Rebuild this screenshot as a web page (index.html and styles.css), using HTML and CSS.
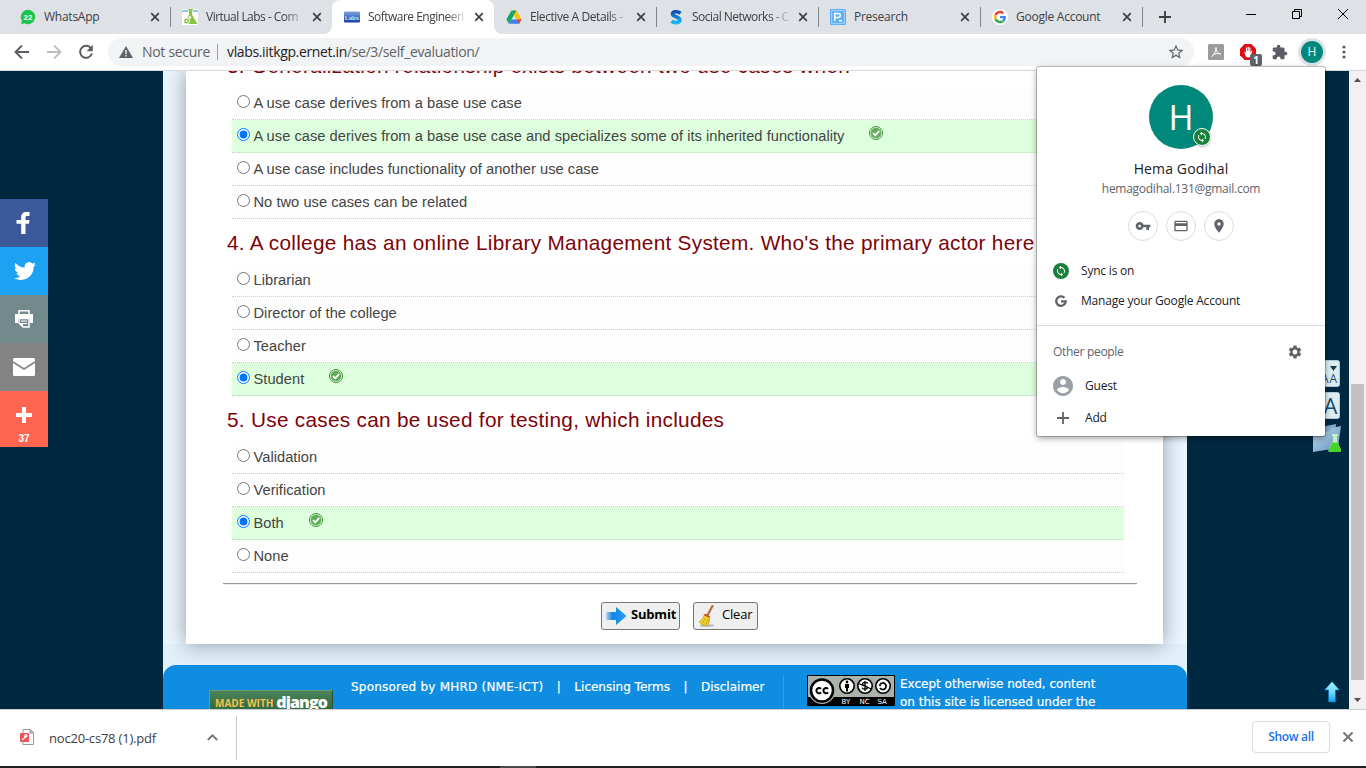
FILE: index.html
```html
<!DOCTYPE html>
<html lang="en">
<head>
<meta charset="utf-8">
<title>Software Engineering Virtual Lab</title>
<link rel="stylesheet" href="styles.css">
</head>
<body>
<svg class="defs" aria-hidden="true">
  <defs>
    <symbol id="close" viewBox="0 0 10 10"><path d="M1.2 1.2l7.6 7.6M8.8 1.2L1.2 8.8" stroke="currentColor" stroke-width="1.7" fill="none"/></symbol>
    <symbol id="sync" viewBox="0 0 24 24"><path fill="currentColor" d="M12 4V1L8 5l4 4V6c3.31 0 6 2.69 6 6 0 1.01-.25 1.97-.7 2.8l1.46 1.46C19.54 15.03 20 13.57 20 12c0-4.42-3.58-8-8-8zm0 14c-3.31 0-6-2.69-6-6 0-1.01.25-1.97.7-2.8L5.24 7.74C4.46 8.97 4 10.43 4 12c0 4.42 3.58 8 8 8v3l4-4-4-4v3z"/></symbol>
    <symbol id="tick" viewBox="0 0 14 14"><circle cx="7" cy="7" r="6.500" fill="#f4fff2" stroke="#3f8f3f" stroke-width="1"/><circle cx="7" cy="7" r="5.400" fill="#5fae5b"/><path d="M4 7l2.200 2.300L10.200 4.800" stroke="#fff" stroke-width="1.800" fill="none"/></symbol>
    <linearGradient id="arrowBlue" x1="0" x2="1"><stop offset="0" stop-color="#0a77dd" stop-opacity=".2"/><stop offset=".3" stop-color="#1286e6"/><stop offset="1" stop-color="#2b9df5"/></linearGradient>
    <linearGradient id="upBlue" x1="0" x2="0" y1="0" y2="1"><stop offset="0" stop-color="#a5f4ff"/><stop offset=".5" stop-color="#6fdcff"/><stop offset="1" stop-color="#0fa4f8"/></linearGradient>
    <linearGradient id="folder" x1="0" x2="1" y1="0" y2="1"><stop offset="0" stop-color="#c5dcf0"/><stop offset="1" stop-color="#5d8fba"/></linearGradient>
    <linearGradient id="labs" x1="0" x2="0" y1="0" y2="1"><stop offset="0" stop-color="#7fa8e0"/><stop offset="1" stop-color="#123fa0"/></linearGradient>
    <linearGradient id="ess" x1="0" x2="0" y1="0" y2="1"><stop offset="0" stop-color="#0b4fae"/><stop offset="1" stop-color="#19b6f2"/></linearGradient>
  </defs>
</svg>

<header class="tabstrip">
  <div class="tab">
    <svg class="fav" viewBox="0 0 16 16"><path d="M8 .8A7.2 7.200 0 1 1 4.500 14.300L1 15.300l1-3.300A7.200 7.200 0 0 1 8 .8z" fill="#19c54a"/><text x="8" y="11" text-anchor="middle" class="fav-count">22</text></svg>
    <span class="tab-title t1">WhatsApp</span><svg class="tab-x"><use href="#close"/></svg>
  </div>
  <div class="tab sep-before">
    <svg class="fav" viewBox="0 0 16 16"><rect width="16" height="16" fill="#fff"/><path d="M0 2h6M11 2h5" stroke="#62b7e5" stroke-width="1.300"/><path d="M6 0h5v1h-.800v5L15.500 15H2.500L7 6V1H6z" fill="#8cc63e"/><circle cx="4.500" cy="12" r="3" fill="#8cc63e" stroke="#fff"/><circle cx="4.500" cy="12" r="1" fill="#fff"/><circle cx="8" cy="8.500" r="1.200" fill="#fff"/></svg>
    <span class="tab-title t2">Virtual Labs - Com</span><svg class="tab-x"><use href="#close"/></svg>
  </div>
  <div class="tab active">
    <svg class="fav" viewBox="0 0 16 16"><rect y="2.500" width="16" height="11" rx="1" fill="url(#labs)"/><text x="8" y="10.500" text-anchor="middle" class="fav-labs">Labs</text></svg>
    <span class="tab-title t3">Software Engineeri</span><svg class="tab-x"><use href="#close"/></svg>
  </div>
  <div class="tab">
    <svg class="fav" viewBox="0 0 16 16"><path d="M5.500 1.500h5L8 6z" fill="#0f9d58"/><path d="M5.500 1.500L.4 10.400 3 14.700 8 6z" fill="#11a861"/><path d="M10.500 1.500l5.100 8.900h-5.100L8 6z" fill="#ffc107"/><path d="M5.400 10.400h5.200L15.600 10.400 13 14.700H3z" fill="#3f7ff0"/><path d="M10.500 10.400h5.100L13 14.700z" fill="#ea4335"/></svg>
    <span class="tab-title t4">Elective A Details -</span><svg class="tab-x"><use href="#close"/></svg>
  </div>
  <div class="tab sep-before">
    <svg class="fav" viewBox="0 0 16 16"><path d="M12.500 4.200C10 2.300 4.500 2 4.500 5.100c0 3 7.300 2.300 7.300 6 0 3.100-5.500 3.300-8.300 1.200" fill="none" stroke="url(#ess)" stroke-width="3.700"/></svg>
    <span class="tab-title t5">Social Networks - C</span><svg class="tab-x"><use href="#close"/></svg>
  </div>
  <div class="tab sep-before">
    <svg class="fav" viewBox="0 0 16 16"><rect width="16" height="16" rx="1" fill="#5bb0fb"/><rect x="1.700" y="1.700" width="12.600" height="12.600" fill="none" stroke="#bcdffd" stroke-width=".8"/><path d="M4.700 12V4.500h3.600a2 2 0 0 1 0 4H4.700M9 11.700h3" fill="none" stroke="#fff" stroke-width="1.500"/></svg>
    <span class="tab-title t6">Presearch</span><svg class="tab-x"><use href="#close"/></svg>
  </div>
  <div class="tab sep-before">
    <svg class="fav" viewBox="0 0 16 16"><circle cx="8" cy="8" r="8" fill="#fff"/><g transform="translate(1.800 1.800) scale(.258)"><path fill="#EA4335" d="M24 9.500c3.540 0 6.710 1.220 9.210 3.600l6.850-6.850C35.900 2.380 30.470 0 24 0 14.620 0 6.510 5.380 2.560 13.220l7.980 6.190C12.430 13.720 17.740 9.500 24 9.500z"/><path fill="#4285F4" d="M46.980 24.550c0-1.570-.15-3.090-.38-4.550H24v9.020h12.940c-.58 2.960-2.260 5.480-4.780 7.180l7.730 6c4.510-4.180 7.090-10.360 7.090-17.650z"/><path fill="#FBBC05" d="M10.530 28.590A14.500 14.500 0 0 1 10.530 19.410l-7.980-6.190a24 24 0 0 0 0 21.560z"/><path fill="#34A853" d="M24 48c6.480 0 11.930-2.130 15.890-5.810l-7.730-6c-2.150 1.450-4.920 2.300-8.160 2.300-6.260 0-11.570-4.220-13.470-9.910l-7.980 6.190C6.510 42.620 14.620 48 24 48z"/></g></svg>
    <span class="tab-title t7">Google Account</span><svg class="tab-x"><use href="#close"/></svg>
  </div>
  <div class="newtab"><svg viewBox="0 0 12 12"><path d="M6 0v12M0 6h12" stroke="#3c4043" stroke-width="1.900"/></svg></div>
  <div class="winctl">
    <svg viewBox="0 0 10 10"><path d="M0 5.500h10" stroke="#000"/></svg>
    <svg viewBox="0 0 10 10"><path d="M.5 2.500h7v7h-7zM2.500 2.500v-2h7v7h-2" fill="none" stroke="#000"/></svg>
    <svg viewBox="0 0 10 10"><path d="M0 0l10 10M10 0L0 10" stroke="#000"/></svg>
  </div>
</header>

<nav class="toolbar">
  <svg class="nav-i" viewBox="0 0 16 16"><path d="M15 8H2M8 1.500L1.500 8 8 14.500" fill="none" stroke="#5a5d61" stroke-width="1.900"/></svg>
  <svg class="nav-i" viewBox="0 0 16 16"><path d="M1 8h13M8 1.500L14.500 8 8 14.500" fill="none" stroke="#bbbdc0" stroke-width="1.900"/></svg>
  <svg class="nav-i" viewBox="0 0 16 16"><path d="M13 4.300A6 6 0 1 0 13.900 9.500" fill="none" stroke="#5a5d61" stroke-width="2"/><path d="M14.800.8v6.400H8.500z" fill="#5a5d61"/></svg>
  <div class="omnibox">
    <svg class="warn" viewBox="0 0 14 12"><path d="M7 0l7 12H0z" fill="#5f6368"/><path d="M7 4v4M7 9v1.500" stroke="#f1f3f4" stroke-width="1.400"/></svg>
    <span class="insecure">Not secure</span><i></i>
    <span class="url"><b>vlabs.iitkgp.ernet.in</b>/se/3/self_evaluation/</span>
    <svg class="star" viewBox="0 0 24 24"><path fill="#5f6368" d="M22 9.240l-7.190-.62L12 2 9.190 8.630 2 9.240l5.460 4.730L5.820 21 12 17.270 18.180 21l-1.630-7.030L22 9.240zM12 15.400l-3.760 2.270 1-4.280-3.320-2.880 4.380-.38L12 6.100l1.710 4.040 4.380.38-3.320 2.880 1 4.280L12 15.400z"/></svg>
  </div>
  <div class="exts">
    <svg viewBox="0 0 16 16"><rect width="16" height="16" rx="1.500" fill="#9b9b9b"/><path d="M3.500 12.500C6 11 8 7.500 8 3.500 8 7 10 10 12.800 10 10 9 6 9.500 3.500 12.500z" fill="none" stroke="#fff" stroke-width="1"/></svg>
    <div class="adblock"><svg viewBox="0 0 16 16"><path d="M4.700 0h6.600L16 4.700v6.600L11.300 16H4.700L0 11.300V4.700z" fill="#e30b13"/><path d="M4.300 8l1 3.500Q6 13.500 8 13.500q2.600 0 3-2.500l1.500-4-1.100-.3L10.500 9V3.500H9.300V7H8.800V2.700H7.600V7H7V3.600H5.900V9L5 7.500z" fill="#fff"/></svg><span class="count">1</span></div>
    <svg viewBox="1 0 23 23"><path fill="#5a5d61" d="M20.500 11H19V7c0-1.100-.9-2-2-2h-4V3.500C13 2.120 11.880 1 10.500 1S8 2.120 8 3.500V5H4c-1.100 0-1.990.9-1.990 2v3.800H3.500c1.490 0 2.700 1.210 2.700 2.700s-1.210 2.700-2.700 2.700H2V20c0 1.100.9 2 2 2h3.800v-1.500c0-1.490 1.210-2.700 2.700-2.700 1.490 0 2.700 1.210 2.700 2.700V22H17c1.100 0 2-.9 2-2v-4h1.500c1.380 0 2.500-1.120 2.500-2.500S21.880 11 20.500 11z"/></svg>
    <span class="me">H</span>
    <svg class="dots" viewBox="0 0 16 16"><g fill="#5a5d61"><circle cx="8" cy="3" r="1.600"/><circle cx="8" cy="8" r="1.600"/><circle cx="8" cy="13" r="1.600"/></g></svg>
  </div>
</nav>

<main class="viewport">
  <aside class="share">
    <div class="fb"><svg viewBox="0 0 24 24" width="24" height="24"><path fill="#fff" d="M17.500 1v4h-2.300c-1.300 0-1.700.6-1.700 1.700V9h4l-.5 3.700h-3.500V23H9.200V12.700H4.500V9h4.700V6.200C9.200 2.800 11.300 1 14.400 1z"/></svg></div>
    <div class="tw"><svg viewBox="0 0 24 24" width="22" height="22"><path fill="#fff" d="M23.950 4.570a10 10 0 0 1-2.820.77 4.960 4.960 0 0 0 2.160-2.720c-.95.55-2 .95-3.120 1.180a4.920 4.920 0 0 0-8.390 4.480C7.690 8.090 4.070 6.130 1.640 3.160a4.920 4.920 0 0 0 1.520 6.570 4.900 4.900 0 0 1-2.230-.61v.06c0 2.380 1.700 4.370 3.950 4.820a5 5 0 0 1-2.210.09 4.940 4.940 0 0 0 4.600 3.420A9.870 9.870 0 0 1 0 19.540a13.940 13.940 0 0 0 7.550 2.210c9.050 0 14-7.500 14-13.980 0-.21 0-.42-.02-.63a9.940 9.940 0 0 0 2.460-2.550z"/></svg></div>
    <div class="pr"><svg viewBox="0 0 20 18" width="20" height="18"><path d="M5 4V.8h10V4" fill="none" stroke="#fff" stroke-width="1.500"/><path d="M1 4h18v9h-3V8H4v5H1z" fill="#fff"/><path d="M5 8.500h10V17H9l-4-4z" fill="#738a8d" stroke="#fff" stroke-width="1.500"/><path d="M7 11h6M8 13.500h5" stroke="#fff"/><path d="M5 13h4v4z" fill="#fff"/></svg></div>
    <div class="ml"><svg viewBox="0 0 22 18" width="22" height="18"><rect width="22" height="18" rx="1.500" fill="#fff"/><path d="M0 4l11 7 11-7" fill="none" stroke="#848484" stroke-width="1.500"/></svg></div>
    <div class="mo"><svg viewBox="0 0 16 16" width="16" height="16"><path d="M8 0v16M0 8h16" stroke="#fff" stroke-width="4"/></svg><span>37</span></div>
  </aside>

  <section class="site">
    <div class="sheet-wrap"><div class="sheet">
      <h2 class="cut"><span>3. Generalization relationship exists between two use cases when</span></h2>
      <ul>
        <li><input type="radio" name="q3"><span>A use case derives from a base use case</span></li>
        <li class="ok"><input type="radio" name="q3" checked><span>A use case derives from a base use case and specializes some of its inherited functionality</span><svg class="tick"><use href="#tick"/></svg></li>
        <li><input type="radio" name="q3"><span>A use case includes functionality of another use case</span></li>
        <li><input type="radio" name="q3"><span>No two use cases can be related</span></li>
      </ul>
      <h2 class="q4"><span>4. A college has an online Library Management System. Who's the primary actor here</span></h2>
      <ul>
        <li><input type="radio" name="q4"><span>Librarian</span></li>
        <li><input type="radio" name="q4"><span>Director of the college</span></li>
        <li><input type="radio" name="q4"><span>Teacher</span></li>
        <li class="ok"><input type="radio" name="q4" checked><span>Student</span><svg class="tick"><use href="#tick"/></svg></li>
      </ul>
      <h2><span>5. Use cases can be used for testing, which includes</span></h2>
      <ul>
        <li><input type="radio" name="q5"><span>Validation</span></li>
        <li><input type="radio" name="q5"><span>Verification</span></li>
        <li class="ok"><input type="radio" name="q5" checked><span>Both</span><svg class="tick"><use href="#tick"/></svg></li>
        <li><input type="radio" name="q5"><span>None</span></li>
      </ul>
      <hr>
      <div class="actions">
        <button class="submit"><svg viewBox="0 0 22 20" width="22" height="20"><path d="M1 6h10V1l10.500 9L11 19v-5H1z" fill="url(#arrowBlue)"/></svg><b>Submit</b></button>
        <button class="clear"><svg viewBox="0 0 18 22" width="18" height="22"><ellipse cx="9" cy="20.500" rx="7.500" ry="1.300" fill="#bbb"/><path d="M14.500 1L9 11" stroke="#b66a42" stroke-width="2.200" stroke-linecap="round"/><path d="M6.500 9.500l5 2.500c.5 3-.5 7-3 8.500C6 21 2 19 1.500 16.500 4 15 5.500 12 6.500 9.500z" fill="#f0cf28" stroke="#c09a10" stroke-width=".8"/><path d="M6.500 9.500l5 2.500" stroke="#d9362b" stroke-width="1.600"/><path d="M7.500 13l-3 5M10 14l-2 5" stroke="#c9a315" stroke-width=".8"/></svg><span>Clear</span></button>
      </div>
    </div></div>
    <footer class="foot">
      <div class="django"><span>MADE WITH</span><b>django</b></div>
      <div class="links"><span class="mhrd">Sponsored by MHRD (NME-ICT)</span><em>|</em><span>Licensing Terms</span><em>|</em><span>Disclaimer</span></div>
      <div class="license">
        <svg viewBox="0 0 88 31" width="88" height="31"><rect width="88" height="31" rx="1" fill="#000"/><rect x="1" y="1" width="86" height="21" fill="#aab2ab"/><path d="M1 22h28v8H1z" fill="#000"/><circle cx="15" cy="15.500" r="13.500" fill="#aab2ab"/><circle cx="15" cy="15.500" r="11" fill="#fff" stroke="#000" stroke-width="2.500"/><g fill="none" stroke="#000" stroke-width="2"><path d="M14 13.900a2.600 2.600 0 1 0 0 3.400M21 13.900a2.600 2.600 0 1 0 0 3.400"/></g><g fill="#fff" stroke="#000" stroke-width="1.600"><circle cx="40" cy="11" r="7.200"/><circle cx="58" cy="11" r="7.200"/><circle cx="76" cy="11" r="7.200"/></g><circle cx="40" cy="7" r="1.400"/><path d="M38 9h4v4h-1v3.500h-2V13h-1z"/><path d="M61 8.500c-1-1.500-5.500-1.500-5.500.5s5 1.500 5 3.600-4.500 2-5.500.2M58 6v10M51.500 8.500l13 5.500" fill="none" stroke="#000" stroke-width="1.300"/><path d="M73 9.500a3.300 3.300 0 1 1 0 3.500" fill="none" stroke="#000" stroke-width="1.700"/><path d="M71.300 9.500h3.400L73 11.500z"/><g class="cc-t"><text x="34.500" y="28.500">BY</text><text x="52.500" y="28.500">NC</text><text x="70.500" y="28.500">SA</text></g></svg>
        <p>Except otherwise noted, content<br>on this site is licensed under the</p>
      </div>
    </footer>
  </section>

  <div class="gutter">
    <div class="font-tools">
      <svg viewBox="0 0 27 27"><rect x=".5" y=".5" width="26" height="26" rx="2" fill="#dcecf3" stroke="#a9cbe0"/><path d="M17 6h7L20.500 11z" fill="#163a53"/><text x="16.500" y="22.500" class="aa">A</text><text x="8" y="22.500" class="aa">A</text></svg>
      <svg viewBox="0 0 27 27"><rect x=".5" y=".5" width="26" height="26" rx="2" fill="#dcecf3" stroke="#a9cbe0"/><text x="10.500" y="21.500" class="big-a">A</text></svg>
      <svg class="folder" viewBox="0 0 30 30"><path d="M1 9l8-5 15-3-1 18-21 9z" fill="#7fa9cb"/><path d="M1 11l17-3 2-3 9-2-3 22-25 4z" fill="url(#folder)"/><path d="M20 11h6v2h-1v5l4 9q0 2-2 2h-9q-2 0-1.500-2L21 18v-5h-1z" fill="#c8efc0"/><path d="M20.500 19.500h5L29 27q0 2-2 2h-9q-2 0-1.500-2z" fill="#45d726"/></svg>
    </div>
    <svg class="top" viewBox="0 0 16 22" width="16" height="22"><path d="M8 .5l7.500 8.500h-4v12h-7V9h-4z" fill="url(#upBlue)" stroke="#0d6da6" stroke-width=".7"/></svg>
  </div>
  <div class="scrollbar"><svg viewBox="0 0 7 4"><path d="M0 4l3.500-4L7 4z"/></svg><div class="thumb"></div><svg viewBox="0 0 7 4"><path d="M0 0h7L3.500 4z"/></svg></div>
</main>

<div class="shelf">
  <svg class="pdf" viewBox="0 0 16 16"><path d="M3 .5h7.500L13.500 3.500v12H3z" fill="#fff" stroke="#999"/><path d="M10 .5v3.500h3.500" fill="#bbb" stroke="#999"/><rect y="4" width="9" height="9" rx="1" fill="#ee5156"/><path d="M2 11l3-2.500V6q2-1 2 .7T4 8" fill="none" stroke="#fff" stroke-width="1.200"/></svg>
  <span class="file">noc20-cs78 (1).pdf</span>
  <svg class="chev" viewBox="0 0 10 6"><path d="M.7 5.300L5 1l4.300 4.300" fill="none" stroke="#73777b" stroke-width="1.700"/></svg>
  <i></i>
  <button class="showall">Show all</button>
  <svg class="shelf-x"><use href="#close"/></svg>
</div>
<div class="taskbar"><i></i></div>

<div class="profile">
  <div class="avatar">H<span class="badge"><svg><use href="#sync"/></svg></span></div>
  <div class="name">Hema Godihal</div>
  <div class="mail">hemagodihal.131@gmail.com</div>
  <div class="chips">
    <span><svg viewBox="0 0 24 24"><path d="M12.650 10C11.830 7.670 9.610 6 7 6c-3.310 0-6 2.690-6 6s2.690 6 6 6c2.610 0 4.830-1.670 5.650-4H17v4h4v-4h2v-4H12.650zM7 14c-1.100 0-2-.9-2-2s.9-2 2-2 2 .9 2 2-.9 2-2 2z"/></svg></span>
    <span><svg viewBox="0 0 24 24"><path d="M20 4H4c-1.110 0-1.990.89-1.990 2L2 18c0 1.110.89 2 2 2h16c1.110 0 2-.89 2-2V6c0-1.110-.89-2-2-2zm0 14H4v-6h16v6zm0-10H4V6h16v2z"/></svg></span>
    <span><svg viewBox="0 0 24 24"><path d="M12 2C8.130 2 5 5.130 5 9c0 5.250 7 13 7 13s7-7.750 7-13c0-3.870-3.130-7-7-7zm0 9.500c-1.380 0-2.500-1.120-2.500-2.500s1.120-2.500 2.500-2.500 2.500 1.120 2.500 2.500-1.120 2.500-2.500 2.500z"/></svg></span>
  </div>
  <div class="row sync"><span class="dot"><svg><use href="#sync"/></svg></span><span>Sync is on</span></div>
  <div class="row"><svg class="g" viewBox="0 0 48 48"><path fill="none" stroke="#5f6368" stroke-width="9" d="M38 11.500A19 19 0 1 0 43 25H24"/></svg><span>Manage your Google Account</span></div>
  <div class="others"><span>Other people</span><svg viewBox="0 0 24 24"><path fill="#5f6368" d="M19.140 12.940c.04-.3.060-.61.060-.94 0-.32-.02-.64-.07-.94l2.030-1.580c.18-.14.23-.41.12-.61l-1.920-3.320c-.12-.22-.37-.29-.59-.22l-2.390.96c-.5-.38-1.030-.7-1.620-.94l-.36-2.540c-.04-.24-.24-.41-.48-.41h-3.840c-.24 0-.43.17-.47.41l-.36 2.540c-.59.24-1.130.57-1.620.94l-2.390-.96c-.22-.08-.47 0-.59.22L2.740 8.870c-.12.21-.08.47.12.61l2.030 1.580c-.05.3-.09.63-.09.94s.02.64.07.94l-2.030 1.580c-.18.14-.23.41-.12.61l1.920 3.320c.12.22.37.29.59.22l2.390-.96c.5.38 1.030.7 1.620.94l.36 2.540c.05.24.24.41.48.41h3.840c.24 0 .44-.17.47-.41l.36-2.540c.59-.24 1.130-.56 1.620-.94l2.390.96c.22.08.47 0 .59-.22l1.920-3.320c.12-.22.07-.47-.12-.61l-2.010-1.580zM12 15.600c-1.980 0-3.600-1.620-3.600-3.600s1.620-3.600 3.600-3.600 3.600 1.620 3.600 3.600-1.620 3.600-3.600 3.600z"/></svg></div>
  <div class="person"><svg viewBox="2 2 20 20"><path fill="#9aa0a6" d="M12 2C6.480 2 2 6.480 2 12s4.480 10 10 10 10-4.480 10-10S17.520 2 12 2zm0 3c1.660 0 3 1.340 3 3s-1.340 3-3 3-3-1.340-3-3 1.340-3 3-3zm0 14.200c-2.500 0-4.710-1.280-6-3.220.03-1.990 4-3.080 6-3.080 1.990 0 5.970 1.090 6 3.080-1.290 1.940-3.500 3.220-6 3.220z"/></svg><span>Guest</span></div>
  <div class="person"><svg viewBox="0 0 20 20"><path d="M10 4v12M4 10h12" stroke="#5f6368" stroke-width="1.800"/></svg><span>Add</span></div>
</div>
</body>
</html>
```
FILE: styles.css
```css
* { box-sizing: border-box; }
body { margin: 0; width: 1366px; height: 768px; overflow: hidden; display: flex; flex-direction: column; font: 12px/16px "Open Sans", "Noto Sans", sans-serif; color: #3c4043; background: #fff; position: relative; }
svg { display: block; flex: none; }
.defs { position: absolute; width: 0; height: 0; }

/* Tab strip */
.tabstrip { height: 34px; flex: none; background: #dee1e6; padding-left: 8px; display: flex; }
.tab { width: 162px; display: flex; align-items: center; padding: 0 10px 0 12px; position: relative; }
.tab.active { background: #fff; border-radius: 8px 8px 0 0; }
.tab.active::before, .tab.active::after { content: ""; position: absolute; bottom: 0; width: 8px; height: 8px; }
.tab.active::before { left: -8px; background: radial-gradient(circle at 0 0, transparent 7.500px, #fff 8px); }
.tab.active::after { right: -8px; background: radial-gradient(circle at 100% 0, transparent 7.500px, #fff 8px); }
.sep-before::before { content: ""; position: absolute; left: 0; top: 7px; height: 20px; width: 1px; background: #808387; }
.fav { width: 16px; height: 16px; margin-right: 8px; }
.fav-count { font: bold 8px "Liberation Sans", sans-serif; fill: #fff; }
.fav-labs { font: bold 6px "Liberation Sans", sans-serif; fill: #cfe0fa; }
.tab-title { width: 98px; overflow: hidden; white-space: nowrap; letter-spacing: -.25px; }
.t2 { letter-spacing: -.52px; }
.t3 { letter-spacing: -.52px; }
.t4 { letter-spacing: -.42px; }
.t5 { letter-spacing: -.52px; }
.t2, .t3, .t4, .t5 { -webkit-mask-image: linear-gradient(90deg, #000 78px, transparent 100px); mask-image: linear-gradient(90deg, #000 78px, transparent 100px); }
.tab-x { width: 10px; height: 10px; margin-left: 8px; color: #3c4043; }
.newtab { width: 45px; display: flex; align-items: center; justify-content: center; border-left: 1px solid transparent; background: linear-gradient(#808387, #808387) 0 7px / 1px 20px no-repeat; background-origin: border-box; }
.newtab svg { width: 12px; height: 12px; }
.winctl { margin-left: auto; display: flex; gap: 36px; padding: 9px 18px 0 0; }
.winctl svg { width: 10px; height: 10px; }

/* Toolbar */
.toolbar { height: 37px; flex: none; border-bottom: 1px solid #d5d7da; display: flex; align-items: center; padding-left: 14px; }
.nav-i { width: 16px; height: 16px; margin-right: 16px; }
.omnibox { width: 1086px; height: 28px; margin-left: -2px; background: #f1f3f4; border-radius: 14px; display: flex; align-items: center; padding-left: 11px; font-size: 14px; color: #5f6368; white-space: nowrap; }
.warn { width: 14px; height: 12px; margin-right: 9px; }
.insecure { width: 75px; letter-spacing: -.3px; }
.omnibox i { width: 1px; height: 16px; background: #9a9da1; margin-right: 9px; }
.url { letter-spacing: -.35px; }
.url b { font-weight: 400; color: #202124; }
.star { width: 18px; height: 18px; margin: 0 9px 0 auto; }
.exts { display: flex; align-items: center; margin-left: 14px; gap: 16px; }
.exts svg { width: 16px; height: 16px; }
.adblock { position: relative; }
.count { position: absolute; left: 10px; top: 10px; width: 12px; height: 12px; border-radius: 2px; background: #5f6368; color: #fff; font: bold 10px/12px "Open Sans", sans-serif; text-align: center; }
.me { width: 22px; height: 22px; margin: 0 -3px; border-radius: 50%; background: #00897b; box-shadow: 0 0 0 3px #dfe1e5; color: #fff; font-size: 12px; line-height: 22px; text-align: center; }

/* Page */
.viewport { height: 638px; flex: none; background: #002941; display: flex; overflow: hidden; }
.share { width: 163px; padding-top: 128px; flex: none; }
.share div { width: 48px; height: 48px; display: flex; align-items: center; justify-content: center; }
.fb { background: #3b5998; } .tw { background: #1da1f2; padding-left: 2px; } .pr { background: #738a8d; } .ml { background: #848484; }
.share .mo { height: 56px; background: #ff6550; flex-direction: column; justify-content: flex-start; padding-top: 16px; }
.mo span { color: #fff; font: bold 10px/12px "Liberation Sans", sans-serif; margin-top: 10px; }
.site { width: 1024px; height: 638px; flex: none; background: #e2f0fa; }
.sheet-wrap { padding: 0 24px 0 23px; background: linear-gradient(#ebf5fe, #ebf5fe) 0 0 / 100% 573px no-repeat; }
.sheet { height: 573px; background: #fff; padding-left: 37px; box-shadow: 0 0 20px rgba(0,20,40,.4); clip-path: inset(0 -24px -21px -23px); font-family: "Liberation Sans", Arial, sans-serif; color: #444; }
.sheet h2 { margin: 0 0 0 4px; height: 45px; font-size: 20.800px; line-height: 45px; letter-spacing: .27px; font-weight: 400; color: #7e0308; white-space: nowrap; padding-top: 1px; }
.sheet h2.cut { height: 16px; overflow: hidden; display: flex; align-items: flex-end; padding: 0; }
.sheet h2.cut span { transform: translateY(1px); }
.sheet ul { list-style: none; margin: 0 0 0 9px; padding: 0; width: 892px; }
.sheet li { height: 33px; border-bottom: 1px dotted #ccc; display: flex; align-items: center; font-size: 14.667px; letter-spacing: .03px; line-height: 32px; background: #fdfdfd; white-space: nowrap; }
.sheet li.ok { background: #dfd; }
.sheet input { margin: 0 3.500px 4px 5px; width: 13px; height: 13px; flex: none; }
.tick { width: 14px; height: 14px; margin: 0 0 6px 25px; }
.sheet hr { width: 914px; height: 2px; margin: 10px 0 0; border: 0; border-top: 1px solid #999; background: #eee; }
.actions { display: flex; gap: 13px; padding: 17px 0 0 378px; }
.actions button { height: 28px; border: 1px solid #767676; border-radius: 3px; background: #efefef; display: flex; align-items: center; padding: 0 0 0 3px; font: 13px "Open Sans", sans-serif; color: #000; letter-spacing: -.2px; }
.submit { width: 79px; } .submit svg { margin-right: 4px; }
.clear { width: 65px; } .clear svg { margin: 0 6px 0 1px; }
.actions b, .actions button span { padding-bottom: 4px; }
.foot { margin-top: 21px; height: 60px; background: #0f8de1; border-radius: 13px 13px 0 0; display: flex; color: #fff; font: 12px/18px "DejaVu Sans", sans-serif; white-space: nowrap; -webkit-text-stroke: .2px #fff; }
.django { margin: 25px 0 0 46px; width: 124px; height: 35px; background: linear-gradient(#4d8257, #2f6940 20px); border: 1px solid #6d9a74; border-right-color: #2a4d33; display: flex; padding: 0 0 0 5px; font: bold 10px/24px "Open Sans", sans-serif; color: #f5c04c; -webkit-text-stroke: 0; }
.django b { color: #fff; font-size: 16px; font-weight: 800; line-height: 22px; margin-left: 3px; letter-spacing: -.9px; }
.links { display: flex; padding-top: 13px; margin-left: 18px; width: 432px; font-size: 12px; }
.mhrd { letter-spacing: .22px; }
.links em { font-style: normal; width: 31px; text-align: center; }
.license { margin-top: 10px; border-left: 1px solid #2ba4e0; padding-left: 23px; display: flex; }
.license p { margin: 0 0 0 5px; font-size: 12px; line-height: 18px; }
.cc-t text { font: 7px "DejaVu Sans", sans-serif; fill: #fff; }

.gutter { width: 162px; display: flex; flex-direction: column; align-items: flex-end; }
.font-tools { margin: 289px 9px 0 0; height: 120px; display: flex; flex-direction: column; gap: 5px; align-items: flex-end; }
.font-tools svg { width: 27px; height: 27px; }
.font-tools .folder { width: 30px; height: 30px; margin: -1px -2px 0 0; }
.aa { font: 12px "Open Sans", sans-serif; fill: #1c4b68; }
.big-a { font: 22px "Open Sans", sans-serif; fill: #1c4b68; }
.top { margin: 201px 9px 0 0; }
.scrollbar { width: 17px; background: #f1f1f1; display: flex; flex-direction: column; align-items: center; padding: 7px 0 7px; }
.scrollbar svg { width: 7px; height: 4px; fill: #505050; }
.thumb { width: 13px; height: 296px; margin: 302px 0 auto; background: #c1c1c1; }

/* Downloads */
.shelf { height: 57px; flex: none; border-top: 1px solid #cfcfcf; display: flex; align-items: center; padding: 0 12px 2px 20px; }
.pdf { width: 16px; height: 16px; margin-right: 13px; }
.file { width: 158px; font-size: 13px; letter-spacing: -.2px; padding-top: 2px; }
.chev { width: 11px; height: 7px; margin-right: 18px; }
.shelf i { width: 1px; height: 44px; margin-top: 2px; background: #c8c8c8; }
.showall { margin-left: auto; width: 78px; height: 32px; background: #fff; border: 1px solid #dadce0; border-radius: 4px; color: #1a73e8; font: 600 12px "Open Sans", sans-serif; letter-spacing: -.3px; padding: 0 0 2px; }
.shelf-x { width: 12px; height: 12px; margin-left: 12px; color: #73777b; }
.taskbar { height: 2px; flex: none; background: #231f20; padding-left: 500px; }
.taskbar i { display: block; width: 36px; height: 2px; background: #4c494a; }

/* Account menu */
.profile { position: absolute; left: 1037px; top: 67px; width: 288px; height: 369px; background: #fff; border-radius: 2px; box-shadow: 0 0 0 1px rgba(0,0,0,.2), 0 2px 6px rgba(0,0,0,.4); padding-top: 18px; color: #202124; letter-spacing: -.2px; white-space: nowrap; }
.avatar { position: relative; width: 64px; height: 64px; margin: 0 auto; border-radius: 50%; background: #00897b; color: #fff; font: 34px/64px "Open Sans", sans-serif; text-align: center; }
.badge { position: absolute; left: 44px; top: 43px; width: 18px; height: 18px; border-radius: 50%; background: #188038; border: 1.500px solid #fff; box-shadow: 0 1px 2px rgba(0,0,0,.3); display: flex; align-items: center; justify-content: center; }
.badge svg, .dot svg { width: 12px; height: 12px; color: #fff; }
.name { margin-top: 10px; text-align: center; font-size: 14px; line-height: 20px; letter-spacing: .13px; }
.mail { margin-top: 2px; text-align: center; color: #5f6368; line-height: 16px; letter-spacing: -.27px; }
.chips { display: flex; gap: 8px; justify-content: center; margin-top: 14px; }
.chips span { width: 30px; height: 30px; border: 1px solid #dadce0; border-radius: 50%; display: flex; align-items: center; justify-content: center; }
.chips svg { width: 16px; height: 16px; fill: #5f6368; }
.row { height: 30px; display: flex; align-items: center; padding-left: 16px; gap: 12px; }
.row.sync { margin-top: 15px; }
.dot { width: 16px; height: 16px; border-radius: 50%; background: #188038; display: flex; align-items: center; justify-content: center; }
.g { width: 12px; height: 12px; margin: 0 2px; }
.others { margin-top: 9px; border-top: 1px solid #dadce0; height: 45px; display: flex; align-items: center; justify-content: space-between; padding: 8px 22px 0 16px; color: #5f6368; letter-spacing: -.3px; }
.others svg { width: 16px; height: 16px; }
.person { height: 32px; display: flex; align-items: center; padding-left: 16px; gap: 12px; }
.person svg { width: 20px; height: 20px; }
```
